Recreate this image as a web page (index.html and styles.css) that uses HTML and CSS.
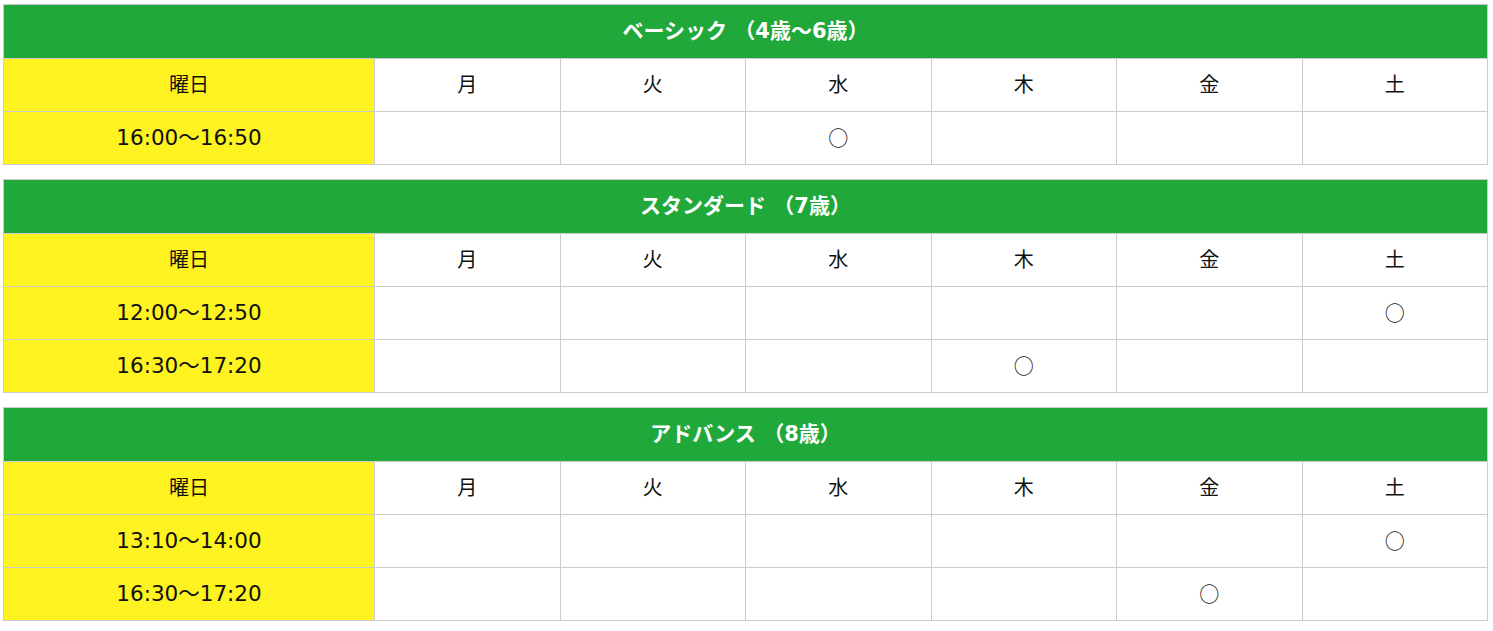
FILE: index.html
```html
<!DOCTYPE html>
<html lang="ja">
<head>
<meta charset="utf-8">
<title>スケジュール</title>
<link rel="stylesheet" href="styles.css">
</head>
<body>
<div class="page">
  <table class="sched">
    <colgroup><col class="c-first"><col><col><col><col><col><col></colgroup>
    <tr><th class="title" colspan="7">ベーシック （4歳～6歳）</th></tr>
    <tr><td class="label">曜日</td><td>月</td><td>火</td><td>水</td><td>木</td><td>金</td><td>土</td></tr>
    <tr><td class="label time">16:00～16:50</td><td></td><td></td><td class="mark">○</td><td></td><td></td><td></td></tr>
  </table>
  <table class="sched">
    <colgroup><col class="c-first"><col><col><col><col><col><col></colgroup>
    <tr><th class="title" colspan="7">スタンダード （7歳）</th></tr>
    <tr><td class="label">曜日</td><td>月</td><td>火</td><td>水</td><td>木</td><td>金</td><td>土</td></tr>
    <tr><td class="label time">12:00～12:50</td><td></td><td></td><td></td><td></td><td></td><td class="mark">○</td></tr>
    <tr><td class="label time">16:30～17:20</td><td></td><td></td><td></td><td class="mark">○</td><td></td><td></td></tr>
  </table>
  <table class="sched">
    <colgroup><col class="c-first"><col><col><col><col><col><col></colgroup>
    <tr><th class="title" colspan="7">アドバンス （8歳）</th></tr>
    <tr><td class="label">曜日</td><td>月</td><td>火</td><td>水</td><td>木</td><td>金</td><td>土</td></tr>
    <tr><td class="label time">13:10～14:00</td><td></td><td></td><td></td><td></td><td></td><td class="mark">○</td></tr>
    <tr><td class="label time">16:30～17:20</td><td></td><td></td><td></td><td></td><td class="mark">○</td><td></td></tr>
  </table>
</div>
</body>
</html>
```
FILE: styles.css
```css
html, body {
  margin: 0;
  padding: 0;
  background: #ffffff;
}
.page {
  padding: 4px 0 0 3px;
  display: flex;
  flex-direction: column;
  gap: 14px;
  font-family: "DejaVu Sans", "Noto Sans CJK JP", sans-serif;
  color: #111111;
}
.sched {
  border-collapse: collapse;
  table-layout: fixed;
  width: 1485px;
}
.c-first {
  width: 371px;
}
.sched th,
.sched td {
  border: 1px solid #cccccc;
  padding: 0;
  text-align: center;
  vertical-align: middle;
  height: 52px;
  font-size: 20px;
  font-weight: normal;
  line-height: 1;
}
.sched th.title {
  background: #20a93a;
  color: #ffffff;
  font-weight: bold;
  font-size: 21px;
  height: 53px;
  font-family: "DejaVu Sans", "Noto Sans CJK JP", sans-serif;
}
.sched td.label {
  background: #fef221;
}
.sched td.time {
  font-size: 21.5px;
}
.sched td.mark {
  font-family: "Noto Sans CJK JP", sans-serif;
}
```
